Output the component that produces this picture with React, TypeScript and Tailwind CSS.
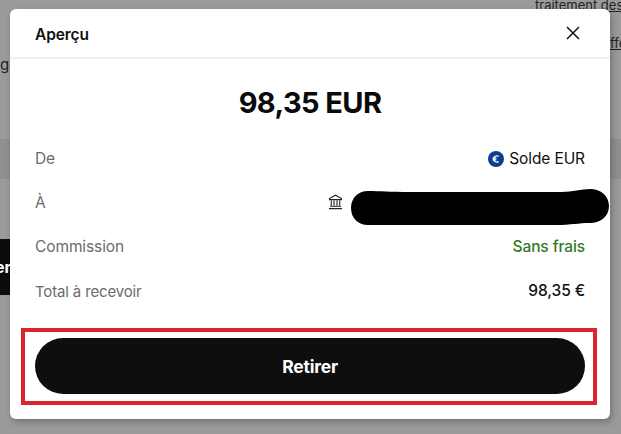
export default function App() {
  const rows = "flex h-[44px] items-center justify-between text-[15.5px] leading-none tracking-[-0.1px]";
  return (
    <div className="relative h-[434px] w-[621px] overflow-hidden bg-[#9a9a9a] font-['Inter',sans-serif]">
      {/* page behind the dialog */}
      <div className="absolute left-0 top-[139px] h-[40px] w-[621px] bg-[#8f8f8f]" />
      <div className="absolute left-0 top-[50px] whitespace-nowrap text-[15px] leading-[30px] text-[#222]">ge</div>
      <div className="absolute left-[535px] top-[-3px] whitespace-nowrap text-[13px] leading-[16px] text-[#222]">
        traitement <span className="underline">des</span>
      </div>
      <div className="absolute left-[610px] top-[35px] text-[13px] leading-[16px] text-[#222] underline">ffe</div>
      <div className="absolute left-0 top-[239px] flex h-[56px] w-[10px] items-center overflow-hidden bg-[#0c0c0c] text-[16px] font-bold text-white">
        <span className="-ml-[5px] whitespace-nowrap">er</span>
      </div>

      {/* dialog */}
      <div className="absolute left-[10px] top-[9px] flex h-[410px] w-[600px] flex-col rounded-[6px] bg-white shadow-[2px_3px_6px_rgba(0,0,0,0.25)]">
        <header className="flex h-[50px] shrink-0 items-center justify-between border-b-2 border-[#f0f0f0] pl-[25px] pr-[30px] pt-[3px]">
          <span className="text-[15.5px] font-semibold tracking-[-0.1px] text-[#0e0f0c]">Aperçu</span>
          <svg className="-mt-[3px]" width="14" height="14" viewBox="0 0 14 14" fill="none" stroke="#111" strokeWidth="1.5" aria-hidden="true">
            <path d="M1 1l12 12M13 1L1 13" />
          </svg>
        </header>

        <h1 className="mt-[27px] text-center text-[29px] font-bold leading-[34px] tracking-[-0.6px] text-[#0a0a0a]">98,35 EUR</h1>

        <div className="mt-[17px] flex flex-col px-[25px]">
          <div className={rows}>
            <span className="text-[#6b6b6b]">De</span>
            <span className="flex items-center gap-[5px] text-[#111]">
              <svg width="16" height="16" viewBox="0 0 16 16" aria-hidden="true">
                <circle cx="8" cy="8" r="8" fill="#0b3d91" />
                <path d="M10.6 5.4A3.2 3.2 0 0 0 5.6 8a3.2 3.2 0 0 0 5 2.6M4.6 7.2h3.8M4.6 8.8h3.8" fill="none" stroke="#fff" strokeWidth="1.3" />
              </svg>
              Solde EUR
            </span>
          </div>
          <div className={`${rows} relative`}>
            <span className="text-[#6b6b6b]">À</span>
            <span className="absolute left-[293px] top-[13px] flex">
              <svg width="15" height="16" viewBox="0 0 15 16" fill="none" stroke="#222" strokeWidth="1.1" aria-hidden="true">
                <path d="M7.5 1.2L1.5 4.6v1h12v-1zM3.3 6.6v5M6 6.6v5M9 6.6v5M11.7 6.6v5M2 12.3h11M1 14.6h13" />
              </svg>
            </span>
            <svg className="absolute left-[315px] top-[7px]" width="260" height="40" viewBox="0 0 260 40" aria-hidden="true">
              <path d="M18 3C30 3 40 4 60 4H212C222 4 232 1 240 1C251 1 259 8 259 18C259 28 251 35 240 35C228 35 222 37 205 37H18C8 37 1 30 1 20C1 10 8 3 18 3Z" fill="#000" />
            </svg>
          </div>
          <div className={rows}>
            <span className="text-[#6b6b6b]">Commission</span>
            <span className="font-medium text-[#2f7a1f]">Sans frais</span>
          </div>
          <div className={rows}>
            <span className="text-[15px] tracking-[-0.15px] text-[#6b6b6b]">Total à recevoir</span>
            <span className="font-medium text-[#111]">98,35 €</span>
          </div>
        </div>

        <div className="ml-[11px] mt-[15px] h-[77px] w-[576px] border-[4px] border-[#dc2430] px-[10px] py-[6px]">
          <button className="flex h-[56px] w-[550px] items-center justify-center rounded-full bg-[#0e0e0e] pt-[2px] text-[17.5px] font-bold tracking-[-0.2px] text-white">
            Retirer
          </button>
        </div>
      </div>
    </div>
  );
}
